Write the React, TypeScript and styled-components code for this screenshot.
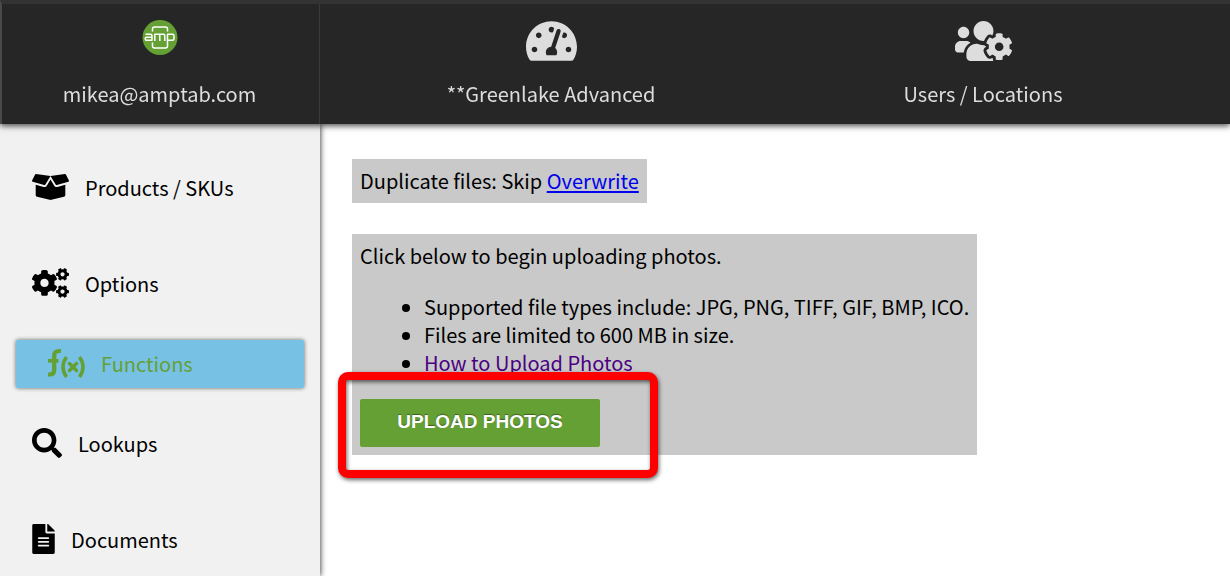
import React from 'react';
import styled, { createGlobalStyle, css } from 'styled-components';
import {
  FaBoxOpen,
  FaCogs,
  FaFileAlt,
  FaSearch,
  FaTachometerAlt,
  FaUsersCog,
} from 'react-icons/fa';

const GlobalStyle = createGlobalStyle`
  *, *::before, *::after { box-sizing: border-box; }
  body {
    margin: 0;
    background: #fff;
    color: #000;
    font-family: "Noto Sans CJK SC", "Noto Sans", sans-serif;
    font-size: 20px;
    line-height: 28px;
  }
`;

const Shell = styled.div`
  display: flex;
  flex-direction: column;
  height: 100vh;
  overflow: hidden;
`;

const Header = styled.header`
  position: relative;
  z-index: 2;
  flex: none;
  display: grid;
  grid-template-columns: 318px 462fr 402fr 46fr;
  background: #262626;
  border-top: 4px solid #333;
  border-left: 2px solid #4a4a4a;
  box-shadow: 0 2px 6px rgba(0, 0, 0, 0.7);
`;

const HeaderLink = styled.a<{ $divided?: boolean }>`
  display: flex;
  flex-direction: column;
  align-items: center;
  gap: 16px;
  height: 120px;
  padding-top: 14px;
  color: #ddd;
  text-decoration: none;
  ${(p) =>
    p.$divided &&
    css`
      padding-right: 2px;
      border-right: 1px solid #3a3a3a;
    `}
`;

const IconSlot = styled.span<{ $width: number; $height: number }>`
  flex: none;
  display: flex;
  align-items: center;
  height: ${(p) => p.$height}px;
  svg {
    flex: none;
    width: ${(p) => p.$width}px;
    height: 100%;
  }
`;

const Body = styled.div`
  flex: 1;
  min-height: 0;
  display: flex;
`;

const Sidebar = styled.nav`
  position: relative;
  z-index: 1;
  flex: none;
  width: 320px;
  padding-top: 16px;
  overflow-y: auto;
  scrollbar-width: none;
  background: #f1f1f1;
  box-shadow: 0 0 6px rgba(0, 0, 0, 0.9);
`;

const NavItem = styled.a<{ $active?: boolean }>`
  display: flex;
  align-items: center;
  gap: 16px;
  height: 96px;
  padding: 0 32px;
  color: #000;
  text-decoration: none;
  ${IconSlot} { margin-bottom: 2px; }
  ${(p) =>
    p.$active &&
    css`
      height: 48px;
      margin: 8px 16px;
      border-radius: 2px;
      background: #77c1e5;
      color: #65a034;
      box-shadow: 0 0 4px rgba(0, 0, 0, 0.6);
    `}
`;

const Main = styled.main`
  flex: 1;
  min-width: 0;
  display: flex;
  flex-direction: column;
  align-items: flex-start;
  gap: 31px;
  padding: 35px 32px;
`;

const Panel = styled.section`
  padding: 8px;
  background: #c9c9c9;
  p { margin: 0; }
`;

const Link = styled.a`
  color: #00e;
  text-decoration-thickness: 2px;
  text-underline-offset: 2px;
`;

const VisitedLink = styled.a`
  color: #4b0082;
  text-decoration: none;
`;

const Notes = styled.ul`
  margin: 23px 0 22px;
  padding-left: 64px;
`;

const Callout = styled.div`
  position: relative;
  width: fit-content;
  &::after {
    content: "";
    position: absolute;
    top: -27px;
    left: -22px;
    width: 320px;
    height: 106px;
    border: 8px solid #f00;
    border-radius: 10px;
    filter: drop-shadow(1px 2px 2px rgba(0, 0, 0, 0.6));
    pointer-events: none;
  }
`;

const UploadButton = styled.button`
  display: block;
  width: 240px;
  height: 48px;
  padding: 0 0 2px;
  border: 0;
  border-radius: 2px;
  background: #65a034;
  color: #fff;
  font: bold 19px/24px "Liberation Sans", Arial, sans-serif;
  text-shadow: 0 -1px 1px rgba(0, 0, 0, 0.4);
`;

const AmpLogo = () => (
  <svg viewBox="0 0 36 46" fill="none" aria-hidden="true">
    <circle cx="18" cy="19.5" r="17.5" fill="#65a034" />
    <g transform="translate(0 2)" stroke="#fff" strokeWidth="1.5" strokeLinejoin="round">
      <path d="M10.5 11.5V9a2 2 0 0 1 2-2h11a2 2 0 0 1 2 2v2.5" />
      <path d="M10.5 22.5V26a2 2 0 0 0 2 2h11a2 2 0 0 0 2-2V14.2h5a1.5 1.5 0 0 1 1.5 1.5v3a1.5 1.5 0 0 1-1.5 1.5h-5" />
      <path d="M3.5 14.2h5a1.5 1.5 0 0 1 1.5 1.5v4.5H4.5a1.2 1.2 0 0 1-1.2-1.2v-.6a1.2 1.2 0 0 1 1.2-1.2H10" />
      <path d="M12.8 20.9v-6.7h8.5a1.5 1.5 0 0 1 1.5 1.5v5.2M17.8 14.2v6.7" />
    </g>
  </svg>
);

const FunctionIcon = () => (
  <svg viewBox="0 0 37 30" fill="none" stroke="currentColor" aria-hidden="true">
    <path d="M13 3H11Q6.300 3 6.200 7.500V22Q6.200 26.500 2 26.500H0" strokeWidth="4.200" />
    <path d="M0 12.800H10.500" strokeWidth="3.800" />
    <path d="M18.500 9Q11.500 19 18.500 29M31.500 9Q38.500 19 31.500 29" strokeWidth="3.500" />
    <path d="M21.500 15.500l7 7M28.500 15.500l-7 7" strokeWidth="3.500" strokeLinecap="round" />
  </svg>
);

const navItems = [
  { label: 'Products / SKUs', icon: <FaBoxOpen />, width: 37 },
  { label: 'Options', icon: <FaCogs />, width: 37 },
  { label: 'Functions', icon: <FunctionIcon />, width: 37, active: true },
  { label: 'Lookups', icon: <FaSearch />, width: 30 },
  { label: 'Documents', icon: <FaFileAlt />, width: 23 },
];

export default function App() {
  return (
    <Shell>
      <GlobalStyle />
      <Header>
        <HeaderLink href="#account" $divided>
          <IconSlot $width={36} $height={46}><AmpLogo /></IconSlot>
          <span>mikea@amptab.com</span>
        </HeaderLink>
        <HeaderLink href="#dashboard">
          <IconSlot $width={51} $height={46}><FaTachometerAlt /></IconSlot>
          <span>**Greenlake Advanced</span>
        </HeaderLink>
        <HeaderLink href="#users">
          <IconSlot $width={57} $height={46}><FaUsersCog /></IconSlot>
          <span>Users / Locations</span>
        </HeaderLink>
      </Header>
      <Body>
        <Sidebar>
          {navItems.map((item) => (
            <NavItem key={item.label} href="#" $active={item.active}>
              <IconSlot $width={item.width} $height={30}>{item.icon}</IconSlot>
              <span>{item.label}</span>
            </NavItem>
          ))}
        </Sidebar>
        <Main>
          <Panel>
            <p>
              Duplicate files: Skip <Link href="#overwrite">Overwrite</Link>
            </p>
          </Panel>
          <Panel>
            <p>Click below to begin uploading photos.</p>
            <Notes>
              <li>Supported file types include: JPG, PNG, TIFF, GIF, BMP, ICO.</li>
              <li>Files are limited to 600 MB in size.</li>
              <li><VisitedLink href="#how-to">How to Upload Photos</VisitedLink></li>
            </Notes>
            <Callout>
              <UploadButton type="button">UPLOAD PHOTOS</UploadButton>
            </Callout>
          </Panel>
        </Main>
      </Body>
    </Shell>
  );
}
